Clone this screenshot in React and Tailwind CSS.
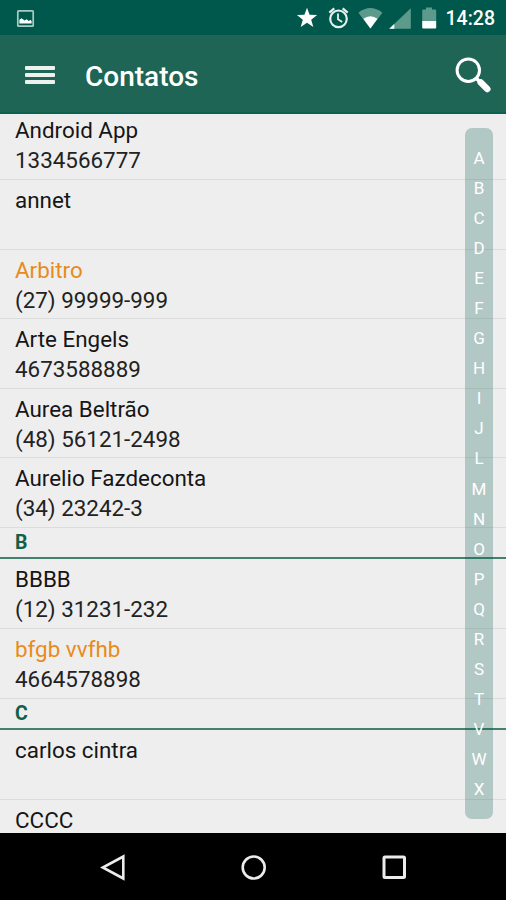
const ENTRIES = [
  { name: 'Android App', phone: '1334566777' },
  { name: 'annet' },
  { name: 'Arbitro', phone: '(27) 99999-999', highlight: true },
  { name: 'Arte Engels', phone: '4673588889' },
  { name: 'Aurea Beltrão', phone: '(48) 56121-2498' },
  { name: 'Aurelio Fazdeconta', phone: '(34) 23242-3' },
  { section: 'B' },
  { name: 'BBBB', phone: '(12) 31231-232' },
  { name: 'bfgb vvfhb', phone: '4664578898', highlight: true },
  { section: 'C' },
  { name: 'carlos cintra' },
  { name: 'CCCC' },
];

const LETTERS = 'ABCDEFGHIJLMNOPQRSTVWX'.split('');

function StatusBar() {
  return (
    <div className="h-[35px] shrink-0 bg-[#00574b] flex items-center justify-between pl-4 pr-[11px]">
      <svg className="w-[19px] h-[19px] mt-[1px]" viewBox="0 0 19 19">
        <rect x="1.8" y="1.8" width="15.4" height="15.4" rx="0.8" fill="none" stroke="#a9cbc3" strokeWidth="1.7" />
        <path d="M3.4 14.6V10.8L5.6 9.200l3 2.200 2-1.100 2 1.600 1.800-1 1.200 1v2.700z" fill="#fff" />
      </svg>
      <svg className="w-[143px] h-[35px] ml-auto mr-[5px]" viewBox="294 0 143 35">
        {/* Estrella */}
        <path d="M307 7.8l2.6 7 7.5.3-5.9 4.6 2.1 7.3-6.3-4.2-6.3 4.2 2.1-7.3-5.9-4.6 7.5-.3z" fill="#fff" />
        {/* Alarma */}
        <g fill="none" stroke="#e4f2ee">
          <circle cx="338.5" cy="18.8" r="8.3" strokeWidth="2.2" />
          <path d="M338 13.5v5.8l4.2 2.7" strokeWidth="1.8" />
          <path d="M329.3 12.6l5-4.2M347.7 12.6l-5-4.2" strokeWidth="2.2" />
        </g>
        {/* Wifi */}
        <path d="M358.4 12.7q12-9.2 24 0L370.4 28.5z" fill="#5c9b8c" />
        <path d="M363.3 18.8q7.1-5 14.2 0L370.4 28.5z" fill="#fff" />
        {/* Cobertura */}
        <path d="M410.8 8.2v20.6h-21.6z" fill="#5c9b8c" />
        <path d="M394.3 24v4.8h-5.1z" fill="#fff" />
        {/* Batería */}
        <path d="M426 7.5h6v2h3.2q1 0 1 1V21h-14V10.500q0-1 1-1H426z" fill="#5c9b8c" />
        <path d="M422.200 21h14v6.500q0 1-1 1h-12q-1 0-1-1z" fill="#fff" />
      </svg>
      <span className="w-[53px] text-right text-[19.500px] leading-none font-medium text-white whitespace-nowrap pt-[3px]">14:28</span>
    </div>
  );
}

function Toolbar() {
  return (
    <header className="h-[79px] shrink-0 bg-[#1e6555] border-b-2 border-[#096150] flex items-center pt-[2px] pl-[25px] pr-[14px]">
      <div className="w-[30px] flex flex-col gap-[3px]">
        <span className="h-[4px] rounded-[1px] bg-[#eef2ee]" />
        <span className="h-[4px] rounded-[1px] bg-[#eef2ee]" />
        <span className="h-[4px] rounded-[1px] bg-[#eef2ee]" />
      </div>
      <h1 className="ml-[30px] mt-[5px] text-[28px] leading-none font-medium text-white">Contatos</h1>
      <svg className="w-[37px] h-[37px] ml-auto" viewBox="455 56 37 37">
        <circle cx="468.3" cy="70.200" r="11.200" fill="none" stroke="#fff" strokeWidth="3" />
        <path d="M475.500 77.500l4 4" stroke="#fff" strokeWidth="3.500" />
        <path d="M480.800 82.500l6.500 6.500" stroke="#fff" strokeWidth="6.500" strokeLinecap="round" />
      </svg>
    </header>
  );
}

function ContactRow({ name, phone, highlight }) {
  return (
    <li className="h-[69.6px] shrink-0 border-b border-[#dcdcdc] pt-[5px] pl-[15px] text-[22.4px] leading-[30px]">
      <p className={highlight ? 'text-[#e88b1a]' : 'text-[#161616]'}>{name}</p>
      {phone && <p className="text-[#222]">{phone}</p>}
    </li>
  );
}

function SectionRow({ letter }) {
  return (
    <li className="h-[31.5px] shrink-0 border-b-2 border-[#43806f] pl-[15px] text-[19.500px] leading-[30px] font-bold text-[#11604b]">
      {letter}
    </li>
  );
}

function AlphabetIndex() {
  return (
    <nav className="absolute top-[14px] right-[13px] w-[28px] h-[691px] rounded-[7px] bg-[#00574b]/25 pt-[14.500px] flex flex-col items-center text-[17px] text-white">
      {LETTERS.map((letter) => (
        <span key={letter} className="h-[30.1px] leading-[30px]">{letter}</span>
      ))}
    </nav>
  );
}

function NavigationBar() {
  return (
    <footer className="h-[67px] shrink-0 bg-black flex items-center justify-center">
      <svg className="w-[310px] h-[40px]" viewBox="98 846 310 40" fill="none" stroke="#ececec">
        <path d="M123.300 855.500v22L102.800 866.500z" strokeWidth="2.600" />
        <circle cx="253.700" cy="866.500" r="11" strokeWidth="2.600" />
        <rect x="384" y="856" width="20.500" height="20.500" rx="1" strokeWidth="3" />
      </svg>
    </footer>
  );
}

export default function App() {
  return (
    <div className="w-[506px] h-[900px] overflow-hidden flex flex-col bg-[#eeeeee] font-['Roboto',sans-serif]">
      <StatusBar />
      <Toolbar />
      <main className="relative flex-1 min-h-0 overflow-hidden">
        <ul className="-mt-[3.7px] flex flex-col">
          {ENTRIES.map((entry) =>
            entry.section ? (
              <SectionRow key={entry.section} letter={entry.section} />
            ) : (
              <ContactRow key={entry.name} {...entry} />
            )
          )}
        </ul>
        <AlphabetIndex />
      </main>
      <NavigationBar />
    </div>
  );
}
